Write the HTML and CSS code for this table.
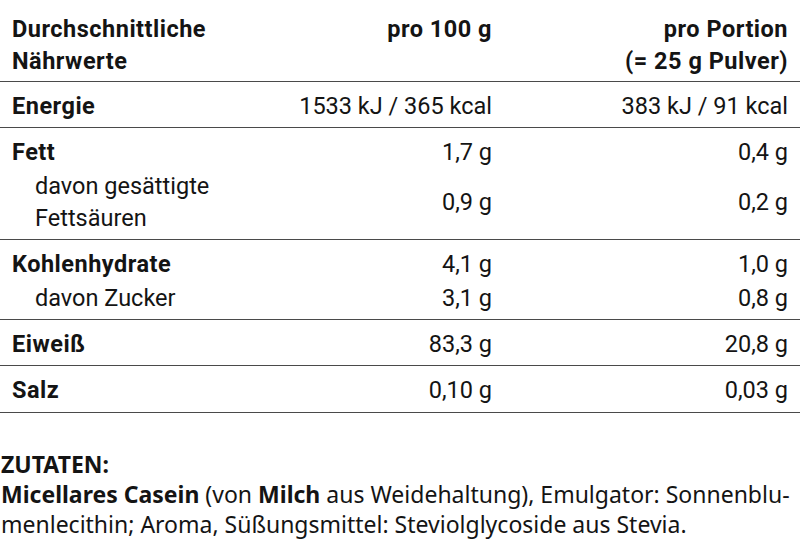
FILE: index.html
```html
<!DOCTYPE html>
<html lang="de">
<head>
<meta charset="utf-8">
<title>Nährwerte</title>
<link rel="stylesheet" href="styles.css">
</head>
<body>
<table class="nutrition">
  <thead>
    <tr>
      <th class="label col-label">Durchschnittliche<br>Nährwerte</th>
      <th class="num col-100">pro 100 g</th>
      <th class="num col-portion">pro Portion<br>(= 25 g Pulver)</th>
    </tr>
  </thead>
  <tbody>
    <tr><td class="label main">Energie</td><td class="num">1533 kJ / 365 kcal</td><td class="num">383 kJ / 91 kcal</td></tr>
  </tbody>
  <tbody>
    <tr><td class="label main">Fett</td><td class="num">1,7 g</td><td class="num">0,4 g</td></tr>
    <tr class="sub-row"><td class="label sub">davon gesättigte<br>Fettsäuren</td><td class="num">0,9 g</td><td class="num">0,2 g</td></tr>
  </tbody>
  <tbody>
    <tr><td class="label main">Kohlenhydrate</td><td class="num">4,1 g</td><td class="num">1,0 g</td></tr>
    <tr class="sub-row"><td class="label sub">davon Zucker</td><td class="num">3,1 g</td><td class="num">0,8 g</td></tr>
  </tbody>
  <tbody>
    <tr><td class="label main">Eiweiß</td><td class="num">83,3 g</td><td class="num">20,8 g</td></tr>
  </tbody>
  <tbody>
    <tr><td class="label main">Salz</td><td class="num">0,10 g</td><td class="num">0,03 g</td></tr>
  </tbody>
</table>
<section class="ingredients">
  <h2 class="ingredients-title">ZUTATEN:</h2>
  <p class="ingredients-text"><strong>Micellares Casein</strong> (von <strong>Milch</strong> aus Weidehaltung), Emulgator: Sonnenblu-<br>menlecithin; Aroma, Süßungsmittel: Steviolglycoside aus Stevia.</p>
</section>
</body>
</html>
```
FILE: styles.css
```css
html, body {
  margin: 0;
  padding: 0;
  background: #ffffff;
}

body {
  width: 800px;
  color: #141414;
  font-family: Roboto, "Liberation Sans", sans-serif;
}

.nutrition {
  width: 800px;
  border-collapse: collapse;
  table-layout: fixed;
  font-size: 23.5px;
  line-height: 32px;
}

.nutrition th,
.nutrition td {
  box-sizing: border-box;
  padding: 0 12px;
  vertical-align: middle;
  font-weight: 400;
}

.col-label { width: 280px; }
.col-100 { width: 224px; }
.col-portion { width: 296px; }

.nutrition th {
  font-weight: 700;
  letter-spacing: 0.5px;
  vertical-align: top;
  padding-top: 13px;
  padding-bottom: 4px;
}

.nutrition thead,
.nutrition tbody {
  border-bottom: 1px solid #4a4a4a;
}

.nutrition .label {
  text-align: left;
}

.nutrition .num {
  text-align: right;
  white-space: nowrap;
}

.nutrition .main {
  font-weight: 700;
  letter-spacing: 0.5px;
}

.nutrition .sub {
  padding-left: 35px;
}

.nutrition tbody tr:first-child td {
  padding-top: 8px;
}

.nutrition tbody .sub-row td {
  padding-top: 2px;
}

.nutrition tbody tr:last-child td {
  padding-bottom: 5px;
}

.nutrition tbody:last-child tr:last-child td {
  padding-bottom: 6px;
}

.ingredients {
  padding: 36px 0 0 1px;
  font-family: "Noto Sans", "Open Sans", sans-serif;
}

.ingredients-title {
  margin: 0;
  font-size: 23px;
  line-height: 30px;
  font-weight: 700;
}

.ingredients-text {
  margin: 0;
  font-size: 23px;
  line-height: 30px;
}

.ingredients-text strong {
  font-weight: 700;
}
```
